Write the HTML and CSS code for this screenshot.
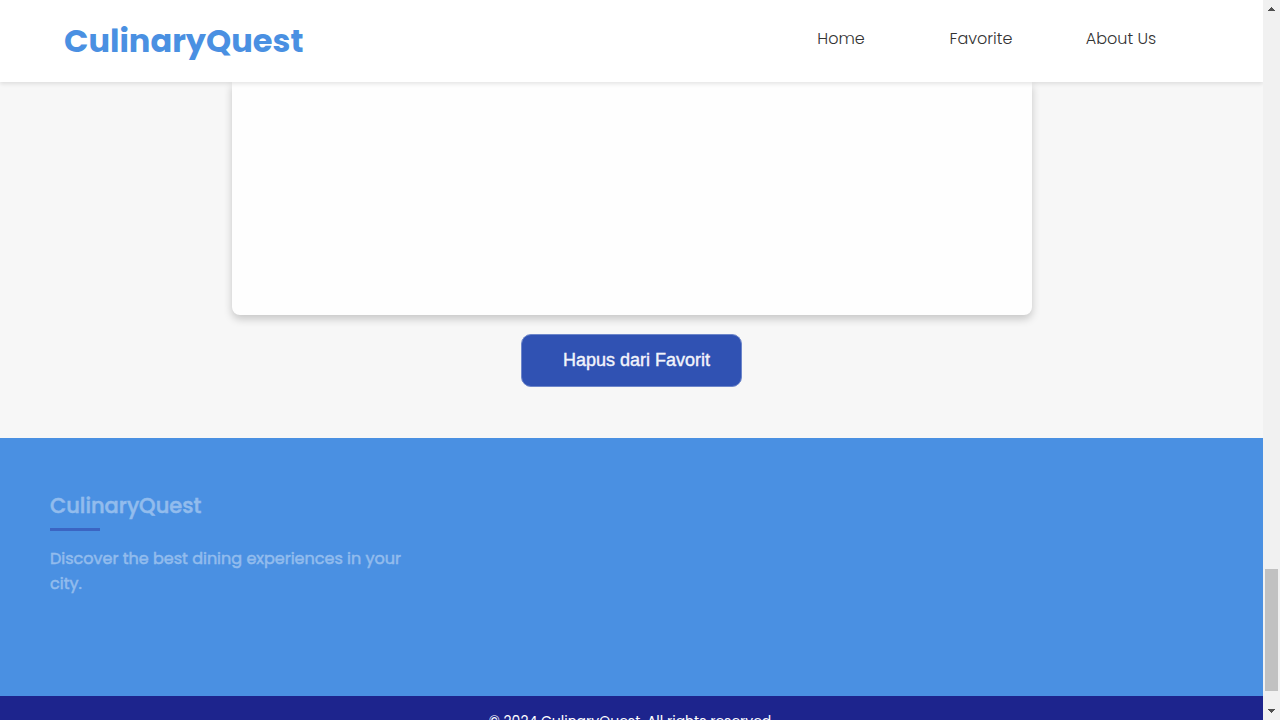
FILE: index.html
```html
<!DOCTYPE html>
<html lang="id">
<head>
  <meta charset="utf-8">
  <meta name="viewport" content="width=device-width, initial-scale=1">
  <title>CulinaryQuest</title>
  <link rel="stylesheet" href="styles.css">
</head>
<body>
  <div class="window">
    <div class="page">
      <header class="header">
        <h1 class="brand">CulinaryQuest</h1>
        <nav class="nav">
          <a class="nav-link" href="#home">Home</a>
          <a class="nav-link" href="#favorite">Favorite</a>
          <a class="nav-link" href="#about">About Us</a>
        </nav>
      </header>
      <main class="main">
        <section class="detail"></section>
        <button class="favorite-button" type="button">Hapus dari Favorit</button>
      </main>
      <footer class="footer">
        <div class="footer-about">
          <h2 class="footer-title">CulinaryQuest</h2>
          <p class="footer-text">Discover the best dining experiences in your city.</p>
        </div>
        <p class="copyright">© 2024 CulinaryQuest. All rights reserved.</p>
      </footer>
    </div>
    <div class="scrollbar" aria-hidden="true">
      <svg class="arrow" viewBox="0 0 17 17" shape-rendering="crispEdges"><path d="M8 7h1v1h1v1h1v1h1v1H5v-1h1V9h1V8h1z"/></svg>
      <div class="track"><div class="thumb"></div></div>
      <svg class="arrow" viewBox="0 0 17 17" shape-rendering="crispEdges"><path d="M5 6h7v1h-1v1h-1v1H9v1H8V9H7V8H6V7H5z"/></svg>
    </div>
  </div>
</body>
</html>
```
FILE: styles.css
```css
* {
  box-sizing: border-box;
}

body,
h1,
h2,
p {
  margin: 0;
}

body {
  font-family: Poppins, Inter, "Liberation Sans", sans-serif;
  font-size: 16px;
  background: #f7f7f7;
}

.window {
  display: grid;
  grid-template-columns: minmax(0, 1fr) 17px;
  height: 100vh;
  overflow: hidden;
}

.page {
  min-width: 0;
  overflow: hidden;
}

.header {
  position: relative;
  z-index: 1;
  display: flex;
  justify-content: space-between;
  padding: 16px 72px 16px 64px;
  background: #fff;
  box-shadow: 0 2px 4px rgba(0, 0, 0, 0.1);
}

.brand {
  color: #4a90e2;
  font-size: 32px;
  font-weight: 700;
  line-height: 50px;
}

.nav {
  display: grid;
  grid-template-columns: repeat(3, 140px);
  text-align: center;
}

.nav-link {
  color: #333;
  font-weight: 300;
  line-height: 46px;
  text-decoration: none;
}

.main {
  display: flex;
  flex-direction: column;
  align-items: center;
  gap: 19px;
  padding: 0 20px 51px;
}

.detail {
  width: 100%;
  max-width: 800px;
  min-height: 233px;
  background: #fefefe;
  border-radius: 0 0 8px 8px;
  box-shadow: 0 4px 8px rgba(0, 0, 0, 0.2);
}

.favorite-button {
  padding: 16px 31px 16px 41px;
  border: 1px solid #6d86ca;
  border-radius: 10px;
  background: #3052b3;
  color: #f2f4fb;
  font-family: "Liberation Sans", Arial, sans-serif;
  font-size: 18px;
  -webkit-text-stroke: 0.4px #f2f4fb;
  line-height: 19px;
}

.footer {
  background: #4a90e2;
}

.footer-about {
  max-width: 421px;
  min-height: 258px;
  padding: 52px 8px 0 50px;
  color: #fff;
  opacity: 0.4;
  -webkit-text-stroke: 0.4px #fff;
}

.footer-title {
  font-size: 21px;
  font-weight: 500;
  line-height: 32px;
}

.footer-title::after {
  content: "";
  display: block;
  width: 50px;
  height: 3px;
  margin-top: 6px;
  background: #252795;
}

.footer-text {
  margin-top: 15px;
  line-height: 25px;
}

.copyright {
  padding: 14px 20px;
  background: #1d248d;
  color: #fff;
  font-size: 14px;
  line-height: 22px;
  text-align: center;
}

.scrollbar {
  display: flex;
  flex-direction: column;
  background: #f1f1f1;
}

.arrow {
  width: 17px;
  height: 17px;
  fill: #505050;
}

.track {
  display: flex;
  flex: 1;
  flex-direction: column;
  justify-content: flex-end;
  padding: 0 2px 12px;
}

.thumb {
  height: 122px;
  background: #c1c1c1;
}
```
